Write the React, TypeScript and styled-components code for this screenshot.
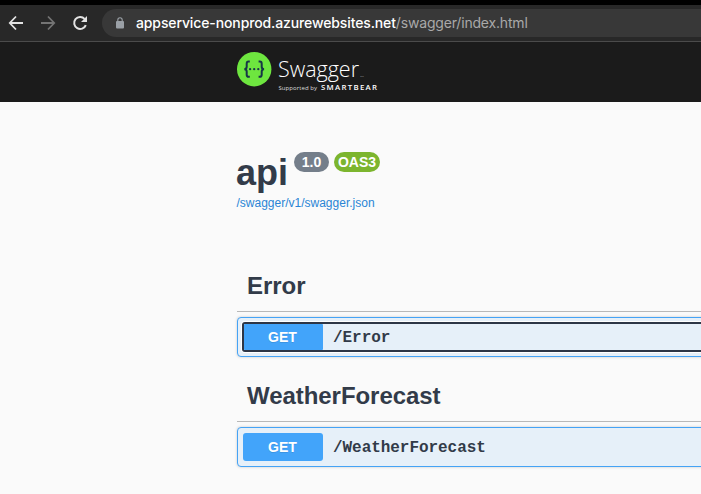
import React from "react";
import styled, { createGlobalStyle } from "styled-components";

const GlobalStyle = createGlobalStyle`
  *, *::before, *::after { box-sizing: border-box; }
  html, body { margin: 0; background: #fafafa; overflow: hidden; }
  body { font-family: "Liberation Sans", Arial, sans-serif; color: #323b49; }
`;

const Window = styled.div`
  width: 100%;
  height: 100vh;
  overflow: hidden;
  display: flex;
  flex-direction: column;
`;

const BrowserBar = styled.header`
  flex: none;
  height: 42px;
  border-top: 5px solid #000;
  border-bottom: 1px solid #4b4b4b;
  background: #282828;
  display: flex;
  align-items: center;
  padding-left: 8px;
`;

const NavButton = styled.button<{ $dim?: boolean }>`
  flex: none;
  width: 16px;
  height: 16px;
  margin-right: 16px;
  padding: 0;
  border: 0;
  background: none;
  color: ${(p) => (p.$dim ? "#747474" : "#e3e3e3")};
  svg { display: block; }
`;

const AddressBar = styled.div`
  flex: 1;
  height: 28px;
  margin-left: -2px;
  padding-left: 14px;
  border-radius: 14px 0 0 14px;
  background: #383838;
  display: flex;
  align-items: center;
`;

const Lock = styled.svg`
  flex: none;
  width: 8px;
  height: 12px;
  margin-right: 12px;
`;

const Url = styled.div`
  font: 400 14px/28px Inter, sans-serif;
  color: #a9a9a9;
  white-space: nowrap;
  letter-spacing: -0.18px;
`;

const Host = styled.span`
  color: #fff;
  font-weight: 500;
  letter-spacing: -0.12px;
`;

const Topbar = styled.div`
  flex: none;
  height: 60px;
  background: #1b1b1b;
  padding: 10px 0 0 237px;
`;

const Logo = styled.svg`
  display: block;
  width: 146px;
  height: 42px;
`;

const Content = styled.main`
  padding-left: 237px;
`;

const Info = styled.section`
  height: 159px;
  padding-top: 50px;
`;

const TitleRow = styled.div`
  display: flex;
  align-items: flex-start;
  height: 43px;
`;

const Title = styled.h1`
  margin: 0 6px 0 -1px;
  width: 52px;
  font-size: 36px;
  line-height: 42px;
`;

const Badge = styled.span<{ $green?: boolean }>`
  height: 20px;
  width: ${(p) => (p.$green ? 46 : 35)}px;
  margin-right: 5px;
  border-radius: 10px;
  background: ${(p) => (p.$green ? "#7cb52e" : "#747e8a")};
  color: #fff;
  font-size: 14px;
  font-weight: 700;
  line-height: 20px;
  text-align: center;
`;

const SpecLink = styled.a`
  display: block;
  width: max-content;
  margin-left: -0.5px;
  font-size: 12px;
  line-height: 16px;
  color: #2a85d5;
  text-decoration: none;
`;

const Tag = styled.section`
  height: 110px;
`;

const TagTitle = styled.h2`
  height: 51px;
  margin: 0 0 5px;
  padding-left: 10px;
  border-bottom: 1px solid #b8b8b8;
  font-size: 24px;
  line-height: 50px;
  letter-spacing: -0.05px;
`;

const Operation = styled.div`
  height: 40px;
  margin-right: -20px;
  padding: 4px;
  border: 1px solid #45a3f5;
  border-radius: 4px;
  background: #e6f0f9;
  box-shadow: 0 0 3px rgba(0, 0, 0, 0.19);
`;

const Summary = styled.div<{ $focused?: boolean }>`
  height: 30px;
  display: flex;
  align-items: center;
  padding: 1px;
  border-radius: 3px;
  ${(p) => p.$focused && "box-shadow: inset 0 0 0 2px #2d3646, 0 0 0 1px #fff;"}
`;

const Method = styled.span<{ $focused?: boolean }>`
  flex: none;
  width: ${(p) => (p.$focused ? 79 : 80)}px;
  height: ${(p) => (p.$focused ? 26 : 28)}px;
  margin-left: ${(p) => (p.$focused ? 1 : 0)}px;
  line-height: ${(p) => (p.$focused ? 26 : 28)}px;
  padding-right: ${(p) => (p.$focused ? 2 : 1)}px;
  border-radius: ${(p) => (p.$focused ? 1 : 3)}px;
  background: #42a4fa;
  color: #fff;
  font-size: 14px;
  font-weight: 700;
  text-align: center;
  text-shadow: 0 1px 0 rgba(0, 0, 0, 0.1);
`;

const Path = styled.span`
  padding: 2px 0 0 10px;
  font: 700 16px/28px "Liberation Mono", monospace;
  letter-spacing: -0.05px;
`;

const operations = [
  { tag: "Error", path: "/Error", focused: true },
  { tag: "WeatherForecast", path: "/WeatherForecast", focused: false },
];

function SwaggerLogo() {
  return (
    <Logo viewBox="0 0 146 42" fill="none">
      <circle cx="17.2" cy="17.2" r="17.2" fill="#6ee63f" />
      <g stroke="#173647" strokeWidth="2">
        <path d="M12.8 9.6H11.6Q9.7 9.6 9.7 11.7V14.8Q9.7 17.2 7.3 17.2Q9.7 17.2 9.7 19.6V22.7Q9.7 24.8 11.6 24.8H12.8" />
        <path d="M21.6 9.6H22.8Q24.7 9.6 24.7 11.7V14.8Q24.7 17.2 27.1 17.2Q24.7 17.2 24.7 19.6V22.7Q24.7 24.8 22.8 24.8H21.6" />
      </g>
      <g fill="#173647">
        <circle cx="13.1" cy="17.2" r="1.15" />
        <circle cx="17.2" cy="17.2" r="1.15" />
        <circle cx="21.3" cy="17.2" r="1.15" />
      </g>
      <text x="41" y="24.5" fontFamily="Open Sans, sans-serif" fontSize="22" fontWeight="300" fill="#fff" textLength="81" lengthAdjust="spacingAndGlyphs">Swagger</text>
      <text x="123.2" y="25" fontFamily="Open Sans, sans-serif" fontSize="2.5" fill="#aaa">TM</text>
      <text x="41.5" y="37.7" fontFamily="Open Sans, sans-serif" fontSize="6" fill="#ddd" textLength="38.5">Supported by</text>
      <text x="84" y="37.7" fontFamily="Open Sans, sans-serif" fontSize="7.8" fontWeight="600" fill="#fff" textLength="56">SMARTBEAR</text>
    </Logo>
  );
}

export default function App() {
  return (
    <Window>
      <GlobalStyle />
      <BrowserBar>
        <NavButton aria-label="Back">
          <svg width="16" height="16" fill="none" stroke="currentColor" strokeWidth="1.8">
            <path d="M8 1.5L1.8 8L8 14.5M2 8H15" />
          </svg>
        </NavButton>
        <NavButton aria-label="Forward" $dim>
          <svg width="16" height="16" fill="none" stroke="currentColor" strokeWidth="1.8">
            <path d="M8 1.5L14.2 8L8 14.5M14 8H1" />
          </svg>
        </NavButton>
        <NavButton aria-label="Reload">
          <svg width="16" height="16" fill="none">
            <path d="M13.8 10.1A6 6 0 1 1 12.6 3.9" stroke="currentColor" strokeWidth="2" />
            <path d="M15 1V7H9Z" fill="currentColor" />
          </svg>
        </NavButton>
        <AddressBar>
          <Lock viewBox="0 0 8 12">
            <path d="M1.8 5V3a2.2 2.2 0 0 1 4.4 0v2" fill="none" stroke="#9aa0a6" strokeWidth="1.1" />
            <rect y="4" width="8" height="7.5" rx="1" fill="#9aa0a6" />
          </Lock>
          <Url><Host>appservice-nonprod.azurewebsites.net</Host>/swagger/index.html</Url>
        </AddressBar>
      </BrowserBar>
      <Topbar><SwaggerLogo /></Topbar>
      <Content>
        <Info>
          <TitleRow>
            <Title>api</Title>
            <Badge>1.0</Badge>
            <Badge $green>OAS3</Badge>
          </TitleRow>
          <SpecLink>/swagger/v1/swagger.json</SpecLink>
        </Info>
        {operations.map((op) => (
          <Tag key={op.tag}>
            <TagTitle>{op.tag}</TagTitle>
            <Operation>
              <Summary $focused={op.focused}>
                <Method $focused={op.focused}>GET</Method>
                <Path>{op.path}</Path>
              </Summary>
            </Operation>
          </Tag>
        ))}
      </Content>
    </Window>
  );
}
